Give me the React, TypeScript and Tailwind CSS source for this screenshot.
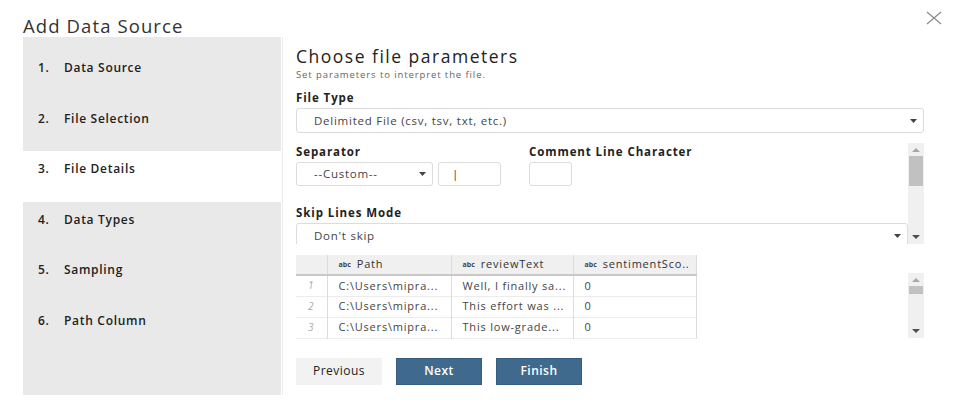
import React from "react";

const font = { fontFamily: '"Open Sans", "Noto Sans", sans-serif' };

function Caret({ className = "" }: { className?: string }) {
  return (
    <svg width="7" height="4" viewBox="0 0 7 4" className={className}>
      <path d="M0 0 L7 0 L3.5 4 Z" fill="#444" />
    </svg>
  );
}

function ScrollBar({ thumbTop, thumbH, className = "" }: { thumbTop: number; thumbH: number; className?: string }) {
  return (
    <div className={"relative w-[16px] bg-[#f0f0f0] " + className}>
      <svg width="8" height="4" viewBox="0 0 8 4" className="absolute left-[4px] top-[5px]">
        <path d="M0 4 L8 4 L4 0 Z" fill="#a6a6a6" />
      </svg>
      <div className="absolute left-[1px] right-[1px] bg-[#c1c1c1]" style={{ top: thumbTop, height: thumbH }} />
      <svg width="8" height="4" viewBox="0 0 8 4" className="absolute left-[4px] bottom-[5px]">
        <path d="M0 0 L8 0 L4 4 Z" fill="#505050" />
      </svg>
    </div>
  );
}

const steps = ["Data Source", "File Selection", "File Details", "Data Types", "Sampling", "Path Column"];

export default function App() {
  return (
    <div className="relative w-[956px] h-[407px] bg-white text-[#333] overflow-hidden" style={font}>
      {/* close */}
      <svg width="16" height="14" viewBox="0 0 16 14" className="absolute left-[926px] top-[11px]">
        <path d="M1 1 L15 13 M15 1 L1 13" stroke="#8a8a8a" strokeWidth="1.2" />
      </svg>

      <div className="pl-[23px] pt-[14px] text-[18.5px] leading-[23px] text-[#333] tracking-[1.1px]">Add Data Source</div>

      <div className="flex pl-[23px]">
        {/* sidebar */}
        <div className="w-[258px] h-[358px] bg-[#e9e9e9] pt-[13px]">
          {steps.map((s, i) => (
            <div
              key={s}
              className={
                "h-[50.5px] flex items-start pt-[9px] text-[12px] font-semibold text-[#222] tracking-[0.7px] " +
                (i === 2 ? "bg-white font-bold" : "")
              }
            >
              <span className="w-[26px] pl-[15px] box-content">{i + 1}.</span>
              <span>{s}</span>
            </div>
          ))}
        </div>

        <div className="w-[1px] h-[358px] bg-[#ececec] ml-[1px]" />

        {/* content */}
        <div className="ml-[13px] w-[628px] flex flex-col">
          <div className="pt-[9px] text-[17.5px] leading-[20px] font-medium text-[#222] tracking-[1.5px]">Choose file parameters</div>
          <div className="mt-[3px] text-[9.5px] leading-[11px] text-[#666] tracking-[0.9px]">Set parameters to interpret the file.</div>

          <div className="mt-[10px] text-[11.5px] leading-[15px] font-bold text-[#222] tracking-[0.9px]">File Type</div>
          <div className="mt-[3px] h-[25px] border border-[#dcdcdc] rounded-[3px] flex items-center justify-between pl-[17px] pr-[6px] text-[11.5px] text-[#444] tracking-[0.75px]">
            <span>Delimited File (csv, tsv, txt, etc.)</span>
            <Caret />
          </div>

          {/* scrollable region */}
          <div className="mt-[10px] h-[101px] flex overflow-hidden">
            <div className="flex-1 flex flex-col">
              <div className="flex">
                <div className="flex flex-col">
                  <div className="pt-[1px] text-[11.5px] leading-[15px] font-bold text-[#222] tracking-[0.9px]">Separator</div>
                  <div className="mt-[3px] flex gap-[5px]">
                    <div className="w-[137px] h-[24px] border border-[#dcdcdc] rounded-[3px] flex items-center justify-between pl-[17px] pr-[6px] text-[11.5px] text-[#444] tracking-[0.75px]">
                      <span>--Custom--</span>
                      <Caret />
                    </div>
                    <div className="w-[63px] h-[24px] border border-[#dcdcdc] rounded-[3px] flex items-center pl-[13px] text-[11.5px] text-[#444]">|</div>
                  </div>
                </div>
                <div className="ml-[28px] flex flex-col">
                  <div className="pt-[1px] text-[11.5px] leading-[15px] font-bold text-[#222] tracking-[0.9px]">Comment Line Character</div>
                  <div className="mt-[3px] w-[43px] h-[24px] border border-[#dcdcdc] rounded-[3px]" />
                </div>
              </div>
              <div className="mt-[19px] text-[11.5px] leading-[15px] font-bold text-[#222] tracking-[0.9px]">Skip Lines Mode</div>
              <div className="mt-[3px] shrink-0 h-[25px] border border-[#dcdcdc] rounded-[3px] flex items-center justify-between pl-[17px] pr-[6px] text-[11.5px] text-[#444] tracking-[0.75px]">
                <span>Don't skip</span>
                <Caret />
              </div>
            </div>
            <ScrollBar thumbTop={13} thumbH={30} />
          </div>

          {/* table */}
          <div className="mt-[11px] flex">
            <div className="flex-1">
              <table className="border-collapse text-[11px] text-[#444] tracking-[0.8px] table-fixed">
                <thead>
                  <tr className="h-[20px] bg-[#f0f0f0] border-b-2 border-[#c8c8c8]">
                    <th className="w-[31px] border-r border-[#dcdcdc]" />
                    {["Path", "reviewText", "sentimentSco.."].map((h, i) => (
                      <th
                        key={h}
                        className={"font-normal text-left pl-[11px] border-r border-[#dcdcdc] whitespace-nowrap " + (i === 2 ? "w-[123px]" : i === 0 ? "w-[124px]" : "w-[122px]")}
                      >
                        <span className="text-[7px] font-bold mr-[6px] align-[1px] tracking-normal">abc</span>
                        <span className="text-[#333]">{h}</span>
                      </th>
                    ))}
                  </tr>
                </thead>
                <tbody>
                  {[
                    ["1", "C:\\Users\\mipra...", "Well, I finally sa...", "0"],
                    ["2", "C:\\Users\\mipra...", "This effort was ...", "0"],
                    ["3", "C:\\Users\\mipra...", "This low-grade...", "0"],
                  ].map((r) => (
                    <tr key={r[0]} className="h-[21px] border-b border-[#ececec]">
                      <td className="border-r border-[#dcdcdc] text-center italic text-[#aaa] text-[10px]">{r[0]}</td>
                      <td className="border-r border-[#dcdcdc] pl-[11px] whitespace-nowrap overflow-hidden">{r[1]}</td>
                      <td className="border-r border-[#dcdcdc] pl-[11px] whitespace-nowrap overflow-hidden">{r[2]}</td>
                      <td className="border-r border-[#dcdcdc] pl-[11px]">{r[3]}</td>
                    </tr>
                  ))}
                </tbody>
              </table>
            </div>
            <div className="pt-[18px]">
              <ScrollBar thumbTop={13} thumbH={8} className="h-[65px]" />
            </div>
          </div>

          {/* buttons */}
          <div className="mt-[19px] flex gap-[14px] text-[12px] tracking-[0.5px]">
            <div className="w-[86px] h-[27px] bg-[#f2f2f2] flex items-center justify-center text-[#222]">Previous</div>
            <div className="w-[86px] h-[27px] bg-[#3f6a8e] border border-[#365d7e] flex items-center justify-center text-white font-semibold">Next</div>
            <div className="w-[86px] h-[27px] bg-[#3f6a8e] border border-[#365d7e] flex items-center justify-center text-white font-semibold">Finish</div>
          </div>
        </div>
      </div>
    </div>
  );
}
